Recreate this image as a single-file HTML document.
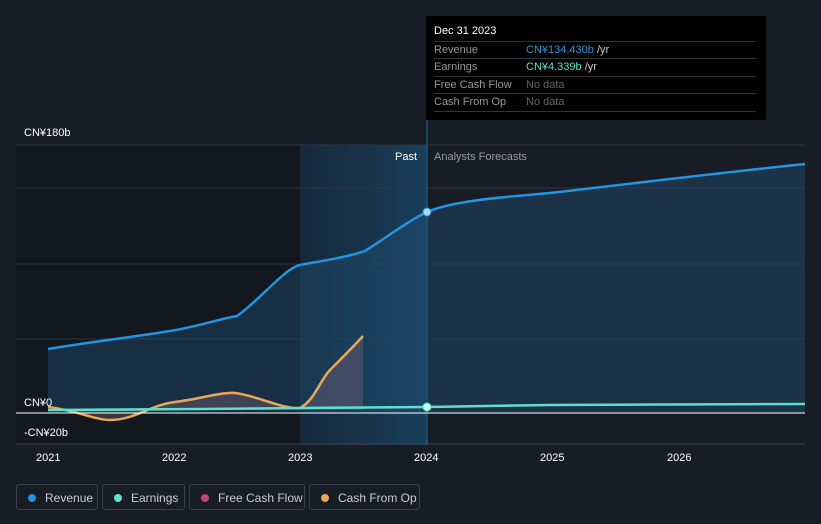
<!DOCTYPE html>
<html><head><meta charset="utf-8"><style>
body{margin:0;width:821px;height:524px;background:#181c25;font-family:"Liberation Sans",sans-serif;overflow:hidden;position:relative}
.tt{position:absolute;left:426px;top:16px;width:340px;height:104px;background:#000;color:#fff;font-size:11px}
.tt .h{position:absolute;left:8px;top:9px;font-size:11px}
.row{position:absolute;left:8px;width:322px;border-top:1px solid #333;height:17px;line-height:17px;color:#999}
.row span{position:absolute;left:92px}
.leg{position:absolute;top:484px;height:26px;border:1px solid #3a3f4a;border-radius:3px;color:#ccc;font-size:12px;line-height:26px;box-sizing:border-box}
.leg i{position:absolute;left:11px;top:9px;width:8px;height:8px;border-radius:50%}
.leg b{font-weight:normal;position:absolute;left:28px}
</style></head><body>
<svg width="821" height="524" style="position:absolute;left:0;top:0">
<defs><linearGradient id="bg" x1="0" x2="1"><stop offset="0" stop-color="#1c4a6e" stop-opacity=".35"/><stop offset="1" stop-color="#1c5a85" stop-opacity=".6"/></linearGradient></defs>
<rect x="16" y="145" width="411" height="300" fill="#13171e"/>
<rect x="300" y="145" width="127" height="300" fill="url(#bg)"/>
<g stroke="#2e3440" stroke-width="1"><line x1="16" x2="805" y1="145" y2="145"/><line x1="16" x2="805" y1="188" y2="188"/><line x1="16" x2="805" y1="264" y2="264"/><line x1="16" x2="805" y1="339" y2="339"/><line x1="16" x2="805" y1="444" y2="444" stroke="#444"/></g>
<line x1="427" x2="427" y1="120" y2="444" stroke="#2a6a9a"/>
<path d="M48,349 C90,342 140,336 170,331 S215,320 237,316 C260,300 285,268 300,265 S345,258 365,251 C390,235 410,220 427,212 C450,202 490,198 550,193 C620,185 700,175 805,164 L805,413 L48,413Z" fill="#1e4d70" fill-opacity=".45"/>
<path d="M48,349 C90,342 140,336 170,331 S215,320 237,316 C260,300 285,268 300,265 S345,258 365,251 C390,235 410,220 427,212 C450,202 490,198 550,193 C620,185 700,175 805,164" fill="none" stroke="#2394df" stroke-width="2.5"/>
<path d="M48,407 C75,410 95,420 110,420 C135,420 150,405 175,402 S220,392 235,393 C255,395 285,410 300,408 C315,400 320,380 330,370 S355,345 363,336 L363,410 L48,410Z" fill="#8a6a78" fill-opacity=".35"/>
<path d="M48,407 C75,410 95,420 110,420 C135,420 150,405 175,402 S220,392 235,393 C255,395 285,410 300,408 C315,400 320,380 330,370 S355,345 363,336" fill="none" stroke="#e8a85a" stroke-width="2.5"/>
<path d="M48,410 L200,409 L300,408 L427,407 L550,405 L805,404" fill="none" stroke="#5ee0cc" stroke-width="2.5"/>
<line x1="16" x2="805" y1="413" y2="413" stroke="#fff"/>
<circle cx="427" cy="212" r="4" fill="#a8dcff" stroke="#2394df"/>
<circle cx="427" cy="407" r="4" fill="#c8fff4" stroke="#5ee0cc"/>
<g fill="#fff" font-size="11" font-family="Liberation Sans"><text x="24" y="136">CN¥180b</text><text x="24" y="406">CN¥0</text><text x="24" y="436">-CN¥20b</text>
<text x="36" y="461">2021</text><text x="162" y="461">2022</text><text x="288" y="461">2023</text><text x="414" y="461">2024</text><text x="540" y="461">2025</text><text x="667" y="461">2026</text>
<text x="395" y="160">Past</text><text x="434" y="160" fill="#999">Analysts Forecasts</text></g>
</svg>
<div class="tt"><div class="h">Dec 31 2023</div>
<div class="row" style="top:25px">Revenue<span style="color:#2394df">CN¥134.430b <em style="font-style:normal;color:#ccc">/yr</em></span></div>
<div class="row" style="top:42px">Earnings<span style="color:#5ee0cc">CN¥4.339b <em style="font-style:normal;color:#ccc">/yr</em></span></div>
<div class="row" style="top:60px">Free Cash Flow<span style="color:#666">No data</span></div>
<div class="row" style="top:77px;border-bottom:1px solid #333">Cash From Op<span style="color:#666">No data</span></div>
</div>
<div class="leg" style="left:16px;width:82px"><i style="background:#2394df"></i><b>Revenue</b></div>
<div class="leg" style="left:102px;width:83px"><i style="background:#5ee0cc"></i><b>Earnings</b></div>
<div class="leg" style="left:189px;width:116px"><i style="background:#c0457e"></i><b>Free Cash Flow</b></div>
<div class="leg" style="left:309px;width:111px"><i style="background:#e8a85a"></i><b>Cash From Op</b></div>
</body></html>
